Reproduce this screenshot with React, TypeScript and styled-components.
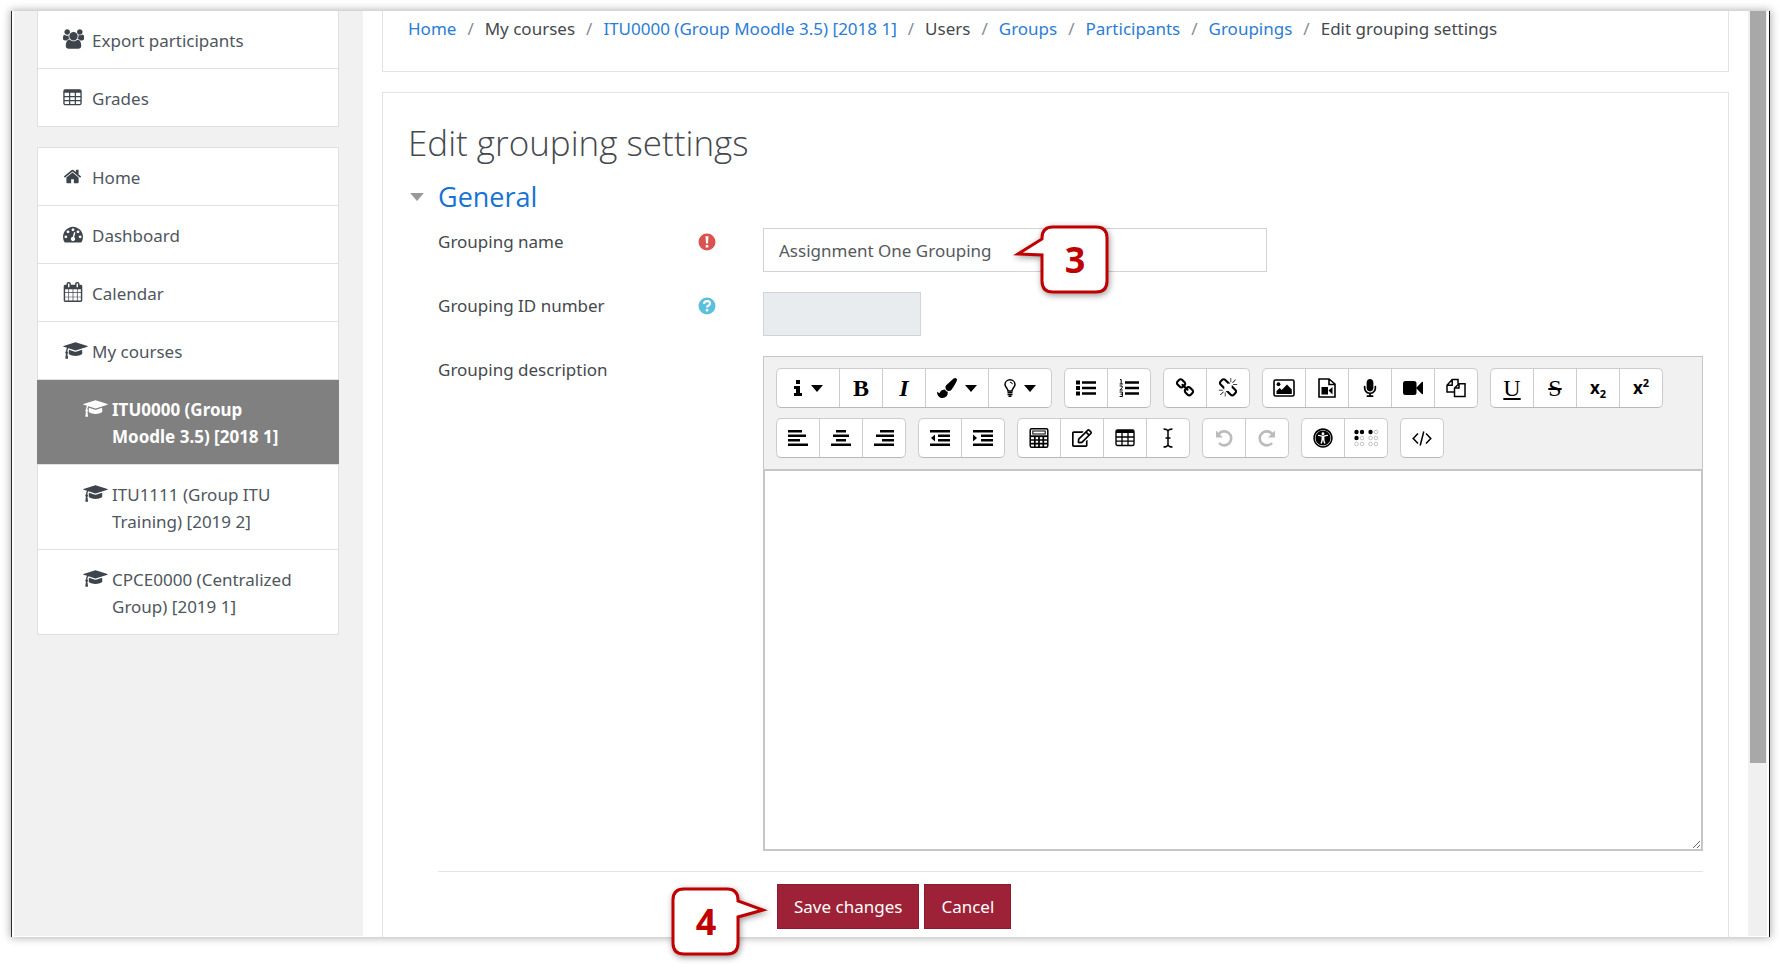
import React from 'react';
import styled, { createGlobalStyle, css } from 'styled-components';
import { FaMicrophone, FaUniversalAccess, FaRegEdit } from 'react-icons/fa';

const GlobalStyle = createGlobalStyle`
  *, *::before, *::after { box-sizing: border-box; }
  body {
    margin: 0;
    background: #fff;
    color: #45494d;
    font-family: 'Noto Sans', 'Open Sans', sans-serif;
    font-size: 17px;
    line-height: 27px;
  }
  button, input, textarea { font: inherit; color: inherit; margin: 0; }
`;

/* ---------- icons ---------- */

const paths = {
  users:
    'M529 896q-162 5-265 128h-134q-82 0-138-40.5t-56-118.5q0-353 124-353 6 0 43.5 21t97.5 42.5 119 21.5q67 0 133-23-5 37-5 66 0 159 90 290zm1071 637q0 120-73 189.5t-194 69.5h-874q-121 0-194-69.5t-73-189.5q0-53 3.5-103.5t14-109 26.5-108.5 43-97.5 62-81 85.5-53.5 111.5-20q10 0 43 21.5t73 48 107 48 135 21.5 135-21.5 107-48 73-48 43-21.5q61 0 111.5 20t85.5 53.5 62 81 43 97.5 26.5 108.5 14 109 3.5 103.5zm-1024-1277q0 106-75 181t-181 75-181-75-75-181 75-181 181-75 181 75 75 181zm704 384q0 159-112.5 271.5t-271.5 112.5-271.5-112.5-112.5-271.5 112.5-271.5 271.5-112.5 271.5 112.5 112.5 271.5zm576 225q0 78-56 118.5t-138 40.5h-134q-103-123-265-128 90-131 90-290 0-29-5-66 66 23 133 23 59 0 119-21.5t97.5-42.5 43.5-21q124 0 124 353zm-128-609q0 106-75 181t-181 75-181-75-75-181 75-181 181-75 181 75 75 181z',
  home:
    'M1472 992v480q0 26-19 45t-45 19h-384v-384h-256v384h-384q-26 0-45-19t-19-45v-480q0-1 .5-3t.5-3l575-474 575 474q1 2 1 6zm223-69l-62 74q-8 9-21 11h-3q-13 0-21-7l-692-577-692 577q-12 8-24 7-13-2-21-11l-62-74q-8-10-7-23.5t11-21.5l719-599q32-26 76-26t76 26l244 204v-195q0-14 9-23t23-9h192q14 0 23 9t9 23v408l219 182q10 8 11 21.5t-7 23.5z',
  dashboard:
    'M384 1152q0-53-37.5-90.5t-90.5-37.5-90.5 37.5-37.5 90.5 37.5 90.5 90.5 37.5 90.5-37.5 37.5-90.5zm192-448q0-53-37.5-90.5t-90.5-37.5-90.5 37.5-37.5 90.5 37.5 90.5 90.5 37.5 90.5-37.5 37.5-90.5zm428 481l101-382q6-26-7.5-48.5t-38.5-29.5-48 6.5-30 39.5l-101 382q-60 5-107 43.5t-63 98.5q-20 77 20 146t117 89 146-20 89-117q16-60-6-117t-72-91zm660-33q0-53-37.5-90.5t-90.5-37.5-90.5 37.5-37.5 90.5 37.5 90.5 90.5 37.5 90.5-37.5 37.5-90.5zm-640-640q0-53-37.5-90.5t-90.5-37.5-90.5 37.5-37.5 90.5 37.5 90.5 90.5 37.5 90.5-37.5 37.5-90.5zm448 192q0-53-37.5-90.5t-90.5-37.5-90.5 37.5-37.5 90.5 37.5 90.5 90.5 37.5 90.5-37.5 37.5-90.5zm320 448q0 261-141 483-19 29-54 29h-1402q-35 0-54-29-141-221-141-483 0-182 71-348t191-286 286-191 348-71 348 71 286 191 191 286 71 348z',
  calendar:
    'M192 1664h288v-288h-288v288zm352 0h320v-288h-320v288zm-352-352h288v-320h-288v320zm352 0h320v-320h-320v320zm-352-384h288v-288h-288v288zm736 736h320v-288h-320v288zm-384-736h320v-288h-320v288zm768 736h288v-288h-288v288zm-384-352h320v-320h-320v320zm-352-864v-288q0-13-9.5-22.5t-22.5-9.5h-64q-13 0-22.5 9.5t-9.5 22.5v288q0 13 9.5 22.5t22.5 9.5h64q13 0 22.5-9.5t9.5-22.5zm736 864h288v-320h-288v320zm-384-384h320v-288h-320v288zm384 0h288v-288h-288v288zm32-480v-288q0-13-9.5-22.5t-22.5-9.5h-64q-13 0-22.5 9.5t-9.5 22.5v288q0 13 9.5 22.5t22.5 9.5h64q13 0 22.5-9.5t9.5-22.5zm384-64v1280q0 52-38 90t-90 38h-1408q-52 0-90-38t-38-90v-1280q0-52 38-90t90-38h128v-96q0-66 47-113t113-47h64q66 0 113 47t47 113v96h384v-96q0-66 47-113t113-47h64q66 0 113 47t47 113v96h128q52 0 90 38t38 90z',
  cap:
    'M1774 836l18 316q4 69-82 128t-235 93.5-323 34.5-323-34.5-235-93.5-82-128l18-316 574 181q22 7 48 7t48-7zm530-324q0 23-22 31l-1120 352q-4 1-10 1t-10-1l-652-206q-43 34-71 111.5t-34 178.5q63 36 63 109 0 69-58 107l58 433q2 14-8 25-9 11-24 11h-192q-15 0-24-11-10-11-8-25l58-433q-58-38-58-107 0-73 65-111 11-207 98-330l-333-104q-22-8-22-31t22-31l1120-352q4-1 10-1t10 1l1120 352q22 8 22 31z',
  link:
    'M1520 1216q0-40-28-68l-208-208q-28-28-68-28-42 0-72 32 3 3 19 18.5t21.5 21.5 15 19 13 25.5 3.5 27.5q0 40-28 68t-68 28q-15 0-27.5-3.5t-25.5-13-19-15-21.5-21.5-18.5-19q-33 31-33 73 0 40 28 68l206 207q27 27 68 27 40 0 68-26l147-146q28-28 28-67zm-703-705q0-40-28-68l-206-207q-28-28-68-28-39 0-68 27l-147 146q-28 28-28 67 0 40 28 68l208 208q27 27 68 27 42 0 72-31-3-3-19-18.5t-21.5-21.5-15-19-13-25.5-3.5-27.5q0-40 28-68t68-28q15 0 27.5 3.5t25.5 13 19 15 21.5 21.5 18.5 19q33-31 33-73zm895 705q0 120-85 203l-147 146q-83 83-203 83-121 0-204-85l-206-207q-83-83-83-203 0-123 88-209l-88-88q-86 88-208 88-120 0-204-84l-208-208q-84-84-84-204t85-203l147-146q83-83 203-83 121 0 204 85l206 207q83 83 83 203 0 123-88 209l88 88q86-88 208-88 120 0 204 84l208 208q84 84 84 204z',
  unlink:
    'M503 1271l-256 256q-10 9-23 9-12 0-23-9-9-10-9-23t9-23l256-256q10-9 23-9t23 9q9 10 9 23t-9 23zm169 41v320q0 14-9 23t-23 9-23-9-9-23v-320q0-14 9-23t23-9 23 9 9 23zm-224-224q0 14-9 23t-23 9h-320q-14 0-23-9t-9-23 9-23 23-9h320q14 0 23 9t9 23zm1264 128q0 120-85 203l-147 146q-83 83-203 83-121 0-204-85l-334-335q-21-21-42-56l239-18 273 274q28 28 68 27.5t68-27.5l147-146q28-28 28-67 0-40-28-68l-274-275 18-239q35 21 56 42l336 336q84 86 84 204zm-617-724l-239 18-273-274q-28-28-68-28-39 0-68 27l-147 146q-28 28-28 67 0 40 28 68l274 274-18 240q-35-21-56-42l-336-336q-84-86-84-204 0-120 85-203l147-146q83-83 203-83 121 0 204 85l334 335q21 21 42 56zm633 84q0 14-9 23t-23 9h-320q-14 0-23-9t-9-23 9-23 23-9h320q14 0 23 9t9 23zm-544-544v320q0 14-9 23t-23 9-23-9-9-23v-320q0-14 9-23t23-9 23 9 9 23zm407 151l-256 256q-11 9-23 9t-23-9q-9-10-9-23t9-23l256-256q10-9 23-9t23 9q9 10 9 23t-9 23z',
  brush:
    'M1615 0q70 0 122.5 46.5t52.5 116.5q0 63-45 151-332 629-465 752-97 91-218 91-126 0-216.5-92.5t-90.5-219.5q0-128 92-212l638-579q59-54 130-54zm-909 1034q39 76 106.5 130t150.5 76l1 71q4 213-129.5 347t-348.5 134q-123 0-218-46.5t-152.5-127.5-86.5-183-29-220q7 5 41 30t62 44.5 59 36.5 46 17q41 0 55-37 25-66 57.5-112.5t69.5-76 88-47.5 103-25.5 125-10.5z',
};

const viewBoxes: Partial<Record<keyof typeof paths, string>> = {
  users: '-64 0 1920 1792',
  cap: '0 0 2304 1792',
};

const Solid = ({ name, w = 18, h = 18 }: { name: keyof typeof paths; w?: number; h?: number }) => (
  <svg width={w} height={h} viewBox={viewBoxes[name] ?? '0 0 1792 1792'} fill="currentColor" aria-hidden="true">
    <path d={paths[name]} />
  </svg>
);

const Glyph = ({ children, size = 20 }: { children: React.ReactNode; size?: number }) => (
  <svg width={size} height={size} viewBox="0 0 20 20" fill="none" stroke="currentColor" strokeWidth="2" aria-hidden="true">
    {children}
  </svg>
);

const TableIcon = ({ size = 20 }: { size?: number }) => (
  <Glyph size={size}>
    <rect x="1" y="2" width="18" height="15.500" rx="1.500" strokeWidth="1.400" />
    <path d="M1 3.500h18" strokeWidth="3" />
    <path d="M1 9h18M1 13.200h18M7 4v13M13 4v13" strokeWidth="1.300" />
  </Glyph>
);

const Caret = () => (
  <svg width="12" height="7" viewBox="0 0 12 7" fill="currentColor" aria-hidden="true">
    <path d="M0 0h12L6 7z" />
  </svg>
);

const Lines = ({ d }: { d: string }) => (
  <Glyph>
    <path d={d} strokeWidth="2.600" />
  </Glyph>
);

const ArcArrow = ({ flip = false }: { flip?: boolean }) => (
  <Glyph>
    <g transform={flip ? 'translate(20 0) scale(-1 1)' : undefined}>
      <path d="M4.600 6.200A7 7 0 1 1 5 15" strokeWidth="2.600" />
      <path d="M2 2.400v7h7z" fill="currentColor" stroke="none" />
    </g>
  </Glyph>
);

const Braille = () => (
  <svg width="25" height="20" viewBox="0 0 25 20" aria-hidden="true">
    {[2.5, 8, 16.5, 22].map((x, c) =>
      [4, 10, 16].map((y, r) => {
        const on = (r === 0 && c < 3) || (r === 1 && c === 0);
        return (
          <circle key={`${c}-${r}`} cx={x} cy={y} r={on ? 2.2 : 1.8} fill={on ? '#000' : 'none'} stroke={on ? 'none' : '#b5b5b5'} strokeWidth="0.8" />
        );
      }),
    )}
  </svg>
);

/* ---------- page frame ---------- */

const Frame = styled.div`
  position: relative;
  display: flex;
  margin: 11px 11px 34px;
  border-left: 1px solid #2c2a28;
  border-right: 1px solid #111;
  background: #fff;
  box-shadow: 0 0 8px 1px rgba(0, 0, 0, 0.3);
`;

const Sidebar = styled.aside`
  flex: 0 0 349px;
  display: flex;
  flex-direction: column;
  gap: 20px;
  margin: 0 0 1px 2px;
  padding: 0 24px 0 23px;
  background: #f1f1f1;
`;

const NavBox = styled.nav<{ $cut?: boolean }>`
  border: 1px solid #e0e0e0;
  ${(p) => p.$cut && css`border-top: 0;`}
  background: #fff;
`;

const NavLink = styled.a<{ $nested?: boolean; $active?: boolean }>`
  display: flex;
  align-items: flex-start;
  padding: 16px 30px 14px ${(p) => (p.$nested ? 45 : 25)}px;
  color: #4f565d;
  text-decoration: none;
  & + & { border-top: 1px solid #e0e0e0; }
  ${(p) =>
    p.$active &&
    css`
      margin: 0 -1px;
      padding-left: 46px;
      background: #808080;
      color: #fff;
      font-weight: 700;
    `}
`;

const NavIcon = styled.span<{ $active?: boolean }>`
  flex: 0 0 29px;
  display: flex;
  align-items: center;
  height: 24px;
  color: ${(p) => (p.$active ? '#fff' : '#3d444b')};
`;

const Main = styled.main`
  flex: 1;
  min-width: 0;
  display: flex;
  flex-direction: column;
  padding: 0 19px;
`;

const Card = styled.section`
  border: 1px solid #e3e3e3;
  padding: 0 25px;
`;

const CrumbCard = styled(Card)`
  border-top: 0;
  margin-bottom: 20px;
  padding-top: 4px;
  padding-bottom: 29px;
`;

const Crumbs = styled.ol`
  display: flex;
  flex-wrap: wrap;
  margin: 0;
  padding: 0;
  list-style: none;
  li + li::before {
    content: '/';
    padding: 0 11px;
    color: #868e96;
  }
`;

const CrumbLink = styled.a`
  color: #2a7dd6;
  text-decoration: none;
`;

const FormCard = styled(Card)`
  border-bottom: 0;
  padding-top: 26px;
  padding-bottom: 8px;
`;

const Title = styled.h2`
  margin: 0 0 11px;
  font-family: 'Open Sans', sans-serif;
  font-size: 35px;
  font-weight: 300;
  line-height: 48px;
`;

const Legend = styled.h3`
  display: flex;
  align-items: center;
  margin: 0 0 12px;
  font-family: 'Open Sans', sans-serif;
  font-size: 27px;
  font-weight: 400;
  line-height: 38px;
`;

const Toggle = styled.button`
  display: flex;
  align-items: center;
  gap: 14px;
  border: 0;
  padding: 0 0 0 2px;
  background: none;
  color: #1674d3;
  svg { width: 14px; height: 8px; color: #999; }
`;

const Fields = styled.form`
  display: flex;
  flex-direction: column;
  gap: 20px;
  padding-left: 30px;
`;

const FieldRow = styled.div`
  display: flex;
`;

const LabelCell = styled.div`
  flex: 0 0 325px;
  display: flex;
  justify-content: space-between;
  align-items: flex-start;
  padding-right: 47px;
`;

const Mark = styled.span<{ $tone: string }>`
  display: flex;
  height: 27px;
  align-items: center;
  border: 0;
  padding: 0;
  background: none;
  color: ${(p) => p.$tone};
`;

const ControlCell = styled.div`
  position: relative;
  flex: 1;
  min-width: 0;
`;

const TextInput = styled.input<{ $short?: boolean }>`
  display: block;
  width: ${(p) => (p.$short ? '158px' : '504px')};
  max-width: 100%;
  height: 44px;
  border: 1px solid #ced4da;
  padding: 0 15px;
  background: #fff;
  color: #55595c;
  &:disabled { background: #e9ecef; }
`;

const Editor = styled.div`
  border: 1px solid #c3c7ca;
`;

const Toolbar = styled.div`
  display: flex;
  flex-direction: column;
  gap: 10px;
  padding: 11px 12px;
  background: #f1f1f1;
`;

const ToolRow = styled.div`
  display: flex;
  flex-wrap: wrap;
  gap: 12px;
`;

const ToolGroup = styled.div`
  display: flex;
  border: 1px solid #ccc;
  border-bottom-color: #b8b8b8;
  border-left-width: 0;
  border-radius: 5px;
  background: #fff;
`;

const ToolButton = styled.button<{ $menu?: boolean; $dim?: boolean }>`
  display: flex;
  align-items: center;
  justify-content: center;
  gap: ${(p) => (p.$menu ? '8px' : '0')};
  width: ${(p) => (p.$menu ? 63 : 43)}px;
  height: 38px;
  border: 0;
  border-left: 1px solid #ccc;
  padding: 0;
  background: none;
  color: ${(p) => (p.$dim ? '#bbb' : '#000')};
  &:first-child { border-radius: 5px 0 0 5px; }
`;

const Serif = styled.span<{ $bold?: boolean; $italic?: boolean; $line?: string }>`
  font-family: 'Liberation Serif', serif;
  font-size: 24px;
  font-weight: ${(p) => (p.$bold ? 700 : 400)};
  font-style: ${(p) => (p.$italic ? 'italic' : 'normal')};
  text-decoration: ${(p) => p.$line ?? 'none'};
`;

const Script = styled.span`
  font-weight: 700;
  line-height: 20px;
  sub, sup { font-size: 11px; line-height: 0; }
`;

const Area = styled.textarea`
  display: block;
  width: 100%;
  height: 381px;
  border: 1px solid #c3c7ca;
  border-top-width: 2px;
  padding: 12px;
  background: #fff;
  resize: vertical;
`;

const Divider = styled.hr`
  width: 100%;
  margin: 0 0 -8px;
  border: 0;
  border-top: 1px solid #e1e5e8;
`;

const Actions = styled.div`
  position: relative;
  display: flex;
  gap: 5px;
  padding-left: 339px;
`;

const ActionButton = styled.button`
  height: 45px;
  border: 1px solid #8f1a2e;
  padding: 0 16px;
  background: #9e2237;
  color: #fff;
`;

const ScrollTrack = styled.div`
  flex: 0 0 19px;
  margin-right: 2px;
  margin-bottom: 1px;
  padding: 0 1px 0 2px;
  background: #f0f0f0;
`;

const ScrollThumb = styled.div`
  height: 81.3%;
  background: #a8a8a8;
`;

/* ---------- numbered callouts ---------- */

const CalloutBox = styled.div<{ $left: number; $top: number }>`
  position: absolute;
  left: ${(p) => p.$left}px;
  top: ${(p) => p.$top}px;
  width: 98px;
  height: 70px;
  pointer-events: none;
  svg { display: block; overflow: visible; filter: drop-shadow(1px 2px 3px rgba(0, 0, 0, 0.4)); }
`;

const CalloutDigit = styled.span<{ $right?: boolean }>`
  position: absolute;
  inset: 0 ${(p) => (p.$right ? '2px 2px 30px' : '30px 2px 2px')};
  display: flex;
  align-items: center;
  justify-content: center;
  color: #c00000;
  font-family: 'Open Sans', sans-serif;
  font-size: 36px;
  font-weight: 700;
`;

const Callout = ({ n, tip, left, top }: { n: number; tip: 'left' | 'right'; left: number; top: number }) => (
  <CalloutBox $left={left} $top={top}>
    <svg width="98" height="70" viewBox="0 0 98 70" aria-hidden="true">
      <path
        d={
          tip === 'left'
            ? 'M41 2H84Q95 2 95 13V56Q95 67 84 67H41Q30 67 30 56V30L6 29L30 14V13Q30 2 41 2Z'
            : 'M13 2H56Q67 2 67 13V14L92 23L67 30V56Q67 67 56 67H13Q2 67 2 56V13Q2 2 13 2Z'
        }
        fill="#fff"
        stroke="#c00000"
        strokeWidth="3"
      />
    </svg>
    <CalloutDigit $right={tip === 'left'}>{n}</CalloutDigit>
  </CalloutBox>
);

/* ---------- data ---------- */

type Tool = { label: string; icon: React.ReactNode; menu?: boolean; dim?: boolean };

const bullets = 'M6 4.5h14M6 10h14M6 15.5h14';

const toolRows: Tool[][][] = [
  [
    [
      {
        label: 'Styles',
        menu: true,
        icon: (
          <svg width="10" height="18" viewBox="0 0 10 18" aria-hidden="true">
            <path d="M3 1h4v4H3zM1 7h6v7h2v3H1v-3h2v-4H1z" />
          </svg>
        ),
      },
      { label: 'Bold', icon: <Serif $bold>B</Serif> },
      { label: 'Italic', icon: <Serif $italic $bold>I</Serif> },
      { label: 'Text colour', menu: true, icon: <Solid name="brush" w={20} h={20} /> },
      {
        label: 'Hints',
        menu: true,
        icon: (
          <svg width="12" height="18" viewBox="0 0 12 18" fill="none" stroke="#000" aria-hidden="true">
            <path d="M4 12C4 9 1 8.500 1 5.500A5 4.700 0 0 1 11 5.500C11 8.500 8 9 8 12Z" strokeWidth="1.500" />
            <path d="M3.500 13.500h5M3.500 15.500h5M4.500 17.200h3" strokeWidth="1.600" />
            <path d="M6 3.200q2 0 2.400 2" strokeWidth="1" />
          </svg>
        ),
      },
    ],
    [
      {
        label: 'Unordered list',
        icon: (
          <Glyph>
            <path d={bullets} strokeWidth="2.600" />
            <path d="M2 2.500v4M2 8v4M2 13.500v4" strokeWidth="4" />
          </Glyph>
        ),
      },
      {
        label: 'Ordered list',
        icon: (
          <Glyph>
            <path d={bullets} strokeWidth="2.600" />
            <path d="M1 1.500h1.200V6M.6 6h3.200M.6 8h2.600v1.700L.8 12h3M.6 14h2.800v4.500H.6M1.400 16.200h2" strokeWidth="1" />
          </Glyph>
        ),
      },
    ],
    [
      { label: 'Link', icon: <Solid name="link" w={20} h={20} /> },
      { label: 'Unlink', icon: <Solid name="unlink" w={20} h={20} /> },
    ],
    [
      {
        label: 'Image',
        icon: (
          <svg width="22" height="18" viewBox="0 0 22 18" aria-hidden="true">
            <rect x="1" y="1" width="20" height="16" rx="1.500" fill="none" stroke="#000" strokeWidth="1.600" />
            <path d="M3.500 15v-3l3.200-3 2 2L14 5.500l4.800 5V15z" />
            <circle cx="5.500" cy="5.200" r="1.900" />
          </svg>
        ),
      },
      {
        label: 'Media',
        icon: (
          <svg width="18" height="20" viewBox="0 0 18 20" aria-hidden="true">
            <path d="M1 1h10l6 5v13H1zM11 1v5.500h6" fill="none" stroke="#000" strokeWidth="1.600" />
            <path d="M3.500 9h6.500v7.500H3.500zM10.500 12.500L14.500 9v7.500z" />
          </svg>
        ),
      },
      { label: 'Record audio', icon: <FaMicrophone size={18} /> },
      {
        label: 'Record video',
        icon: (
          <svg width="20" height="16" viewBox="0 0 20 16" aria-hidden="true">
            <rect x="0" y="1" width="13.500" height="14" rx="2.500" />
            <path d="M13 8l5.800-6q1.200-.6 1.200.6v10.800q0 1.200-1.200.6z" />
          </svg>
        ),
      },
      {
        label: 'Manage files',
        icon: (
          <Glyph>
            <path d="M8.500 14H1V7.200L6.200 1.500H12v4.300M6.200 1.500v5.700H1M8.500 18.500V10L13 5.800h6v12.700zM13 5.800V10H8.500" strokeWidth="1.500" />
          </Glyph>
        ),
      },
    ],
    [
      { label: 'Underline', icon: <Serif $line="underline">U</Serif> },
      { label: 'Strike through', icon: <Serif $line="line-through">S</Serif> },
      { label: 'Subscript', icon: <Script>x<sub>2</sub></Script> },
      { label: 'Superscript', icon: <Script>x<sup>2</sup></Script> },
    ],
  ],
  [
    [
      { label: 'Left align', icon: <Lines d="M0 3.200h14M0 7.700h18M0 12.200h12M0 16.700h20" /> },
      { label: 'Centre', icon: <Lines d="M5 3.200h10M2 7.700h16M5 12.200h10M0 16.700h20" /> },
      { label: 'Right align', icon: <Lines d="M6 3.200h14M2 7.700h18M8 12.200h12M0 16.700h20" /> },
    ],
    [
      {
        label: 'Outdent',
        icon: (
          <Glyph>
            <path d="M0 3.200h20M8 7.700h12M8 12.200h12M0 16.700h20" strokeWidth="2.600" />
            <path d="M5 6.500v7L1 10z" fill="currentColor" stroke="none" />
          </Glyph>
        ),
      },
      {
        label: 'Indent',
        icon: (
          <Glyph>
            <path d="M0 3.200h20M8 7.700h12M8 12.200h12M0 16.700h20" strokeWidth="2.600" />
            <path d="M0 6.500v7L4 10z" fill="currentColor" stroke="none" />
          </Glyph>
        ),
      },
    ],
    [
      {
        label: 'Equation editor',
        icon: (
          <Glyph>
            <rect x="1.200" y=".8" width="17.600" height="18.400" rx="1.500" strokeWidth="1.500" />
            <rect x="3.800" y="3" width="12.400" height="3" strokeWidth="1" />
            <path d="M1.500 8.200h17" strokeWidth="1.800" />
            <path d="M1.500 12h17M1.500 15.600h17M5.800 8v11M10 8v11M14.300 8v11" strokeWidth="1.700" />
          </Glyph>
        ),
      },
      { label: 'Insert character', icon: <FaRegEdit size={20} /> },
      { label: 'Table', icon: <TableIcon /> },
      {
        label: 'Clear formatting',
        icon: (
          <Glyph>
            <path d="M5.500 1q4 0 4.500 2.500Q10.500 1 14.500 1M5.500 19q4 0 4.500-2.500 .5 2.500 4.500 2.500M10 3v14M7.500 10h5" strokeWidth="1.500" />
          </Glyph>
        ),
      },
    ],
    [
      { label: 'Undo', dim: true, icon: <ArcArrow /> },
      { label: 'Redo', dim: true, icon: <ArcArrow flip /> },
    ],
    [
      { label: 'Accessibility checker', icon: <FaUniversalAccess size={20} /> },
      { label: 'Screenreader helper', icon: <Braille /> },
    ],
    [
      {
        label: 'HTML',
        icon: (
          <Glyph>
            <path d="M6 5.500L1.200 10.500 6 15.500M14 5.500l4.800 5-4.800 5M11.800 3.500L8.200 17.500" strokeWidth="1.500" />
          </Glyph>
        ),
      },
    ],
  ],
];

const crumbs: [string, boolean][] = [
  ['Home', true],
  ['My courses', false],
  ['ITU0000 (Group Moodle 3.5) [2018 1]', true],
  ['Users', false],
  ['Groups', true],
  ['Participants', true],
  ['Groupings', true],
  ['Edit grouping settings', false],
];

type Item = { text: string; icon: React.ReactNode; nested?: boolean; active?: boolean };

const cap = <Solid name="cap" w={25} h={19} />;

const courseTools: Item[] = [
  { text: 'Export participants', icon: <Solid name="users" w={21} h={20} /> },
  { text: 'Grades', icon: <TableIcon size={19} /> },
];

const siteNav: Item[] = [
  { text: 'Home', icon: <Solid name="home" w={19} h={19} /> },
  { text: 'Dashboard', icon: <Solid name="dashboard" w={20} h={20} /> },
  { text: 'Calendar', icon: <Solid name="calendar" w={20} h={20} /> },
  { text: 'My courses', icon: cap },
  { text: 'ITU0000 (Group Moodle 3.5) [2018 1]', icon: cap, nested: true, active: true },
  { text: 'ITU1111 (Group ITU Training) [2019 2]', icon: cap, nested: true },
  { text: 'CPCE0000 (Centralized Group) [2019 1]', icon: cap, nested: true },
];

const Nav = ({ items, label, cut }: { items: Item[]; label: string; cut?: boolean }) => (
  <NavBox aria-label={label} $cut={cut}>
    {items.map((it) => (
      <NavLink key={it.text} href="#" $nested={it.nested} $active={it.active}>
        <NavIcon $active={it.active}>{it.icon}</NavIcon>
        <span>{it.text}</span>
      </NavLink>
    ))}
  </NavBox>
);

export default function App() {
  return (
    <>
      <GlobalStyle />
      <Frame>
        <Sidebar>
          <Nav items={courseTools} label="Course" cut />
          <Nav items={siteNav} label="Site" />
        </Sidebar>
        <Main>
          <CrumbCard>
            <Crumbs>
              {crumbs.map(([text, isLink]) => (
                <li key={text}>{isLink ? <CrumbLink href="#">{text}</CrumbLink> : text}</li>
              ))}
            </Crumbs>
          </CrumbCard>
          <FormCard>
            <Title>Edit grouping settings</Title>
            <Legend>
              <Toggle type="button" aria-expanded="true">
                <Caret />
                General
              </Toggle>
            </Legend>
            <Fields onSubmit={(e) => e.preventDefault()}>
              <FieldRow>
                <LabelCell>
                  <label htmlFor="name">Grouping name</label>
                  <Mark $tone="#d9534f">
                    <svg width="18" height="18" viewBox="0 0 18 18" aria-hidden="true">
                      <circle cx="9" cy="9" r="8.500" fill="currentColor" />
                      <path d="M7.500 3.300h3l-.5 7.200H8zM7.700 12h2.600v2.600H7.700z" fill="#fff" />
                    </svg>
                  </Mark>
                </LabelCell>
                <ControlCell>
                  <TextInput id="name" type="text" defaultValue="Assignment One Grouping" />
                  <Callout n={3} tip="left" left={249} top={-3} />
                </ControlCell>
              </FieldRow>
              <FieldRow>
                <LabelCell>
                  <label htmlFor="idnumber">Grouping ID number</label>
                  <Mark as="button" type="button" aria-label="Help with Grouping ID number" $tone="#5bc0de">
                    <svg width="18" height="18" viewBox="0 0 18 18" aria-hidden="true">
                      <circle cx="9" cy="9" r="8.500" fill="currentColor" />
                      <path d="M6 7q.2-3 3.200-3 2.800.1 2.800 2.400 0 1.400-1.500 2.200Q9 9.300 9 10.600" fill="none" stroke="#fff" strokeWidth="2.200" />
                      <path d="M7.800 12h2.500v2.400H7.800z" fill="#fff" />
                    </svg>
                  </Mark>
                </LabelCell>
                <ControlCell>
                  <TextInput id="idnumber" type="text" disabled $short />
                </ControlCell>
              </FieldRow>
              <FieldRow>
                <LabelCell>
                  <label htmlFor="description">Grouping description</label>
                </LabelCell>
                <ControlCell>
                  <Editor>
                    <Toolbar role="toolbar" aria-label="Editor">
                      {toolRows.map((row, r) => (
                        <ToolRow key={r}>
                          {row.map((group, g) => (
                            <ToolGroup key={g}>
                              {group.map((t) => (
                                <ToolButton key={t.label} type="button" aria-label={t.label} $menu={t.menu} $dim={t.dim}>
                                  {t.icon}
                                  {t.menu && <Caret />}
                                </ToolButton>
                              ))}
                            </ToolGroup>
                          ))}
                        </ToolRow>
                      ))}
                    </Toolbar>
                    <Area id="description" />
                  </Editor>
                </ControlCell>
              </FieldRow>
              <Divider />
              <Actions>
                <ActionButton type="submit">Save changes</ActionButton>
                <ActionButton type="button">Cancel</ActionButton>
                <Callout n={4} tip="right" left={233} top={3} />
              </Actions>
            </Fields>
          </FormCard>
        </Main>
        <ScrollTrack>
          <ScrollThumb />
        </ScrollTrack>
      </Frame>
    </>
  );
}
